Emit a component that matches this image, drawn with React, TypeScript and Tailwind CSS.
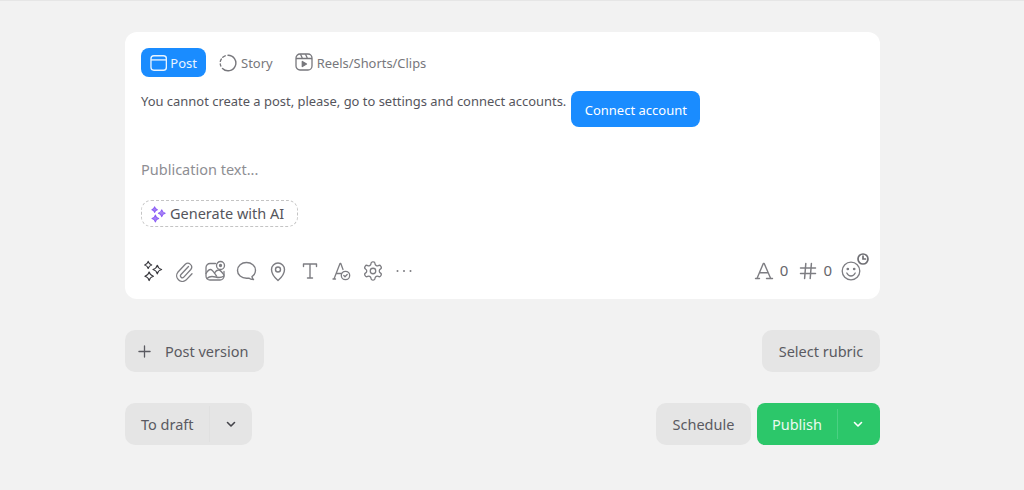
import React from "react";

const S = { fill: "none", stroke: "currentColor", strokeWidth: 1.5, strokeLinecap: "round" as const, strokeLinejoin: "round" as const };

function Sparkles({ className = "", w = 1.3, fill = "none" }: { className?: string; w?: number; fill?: string }) {
  return (
    <svg viewBox="0 0 24 24" className={className} {...S} strokeWidth={w} fill={fill}>
      <path d="M7.500 2.500c.6 2.300 1.400 3.100 3.700 3.700-2.300.6-3.100 1.400-3.700 3.700-.6-2.300-1.400-3.100-3.700-3.700 2.300-.6 3.100-1.400 3.700-3.700Z" />
      <path d="M17 6.500c.7 2.800 1.700 3.800 4.500 4.500-2.800.7-3.800 1.700-4.500 4.500-.7-2.800-1.700-3.800-4.500-4.500 2.800-.7 3.800-1.700 4.500-4.500Z" />
      <path d="M8.500 13.500c.7 2.900 1.600 3.800 4.500 4.500-2.900.7-3.800 1.600-4.500 4.500C7.800 19.600 6.900 18.700 4 18c2.900-.7 3.800-1.600 4.500-4.500Z" />
    </svg>
  );
}

function Chevron() {
  return (
    <svg viewBox="0 0 12 12" className="w-3 h-3" fill="none" stroke="currentColor" strokeWidth="1.6" strokeLinecap="round" strokeLinejoin="round">
      <path d="M2.500 4.500 6 8l3.500-3.500" />
    </svg>
  );
}

export default function App() {
  return (
    <div className="min-h-[490px] bg-[#f2f2f2] border-t border-[#e6e6e6] text-[#5a5a61] font-['Noto_Sans','Open_Sans',sans-serif]">
      <div className="w-[755px] ml-[125px] pt-[31px]">
        <div className="bg-white rounded-xl h-[267px] px-[16px] pt-[16px] flex flex-col">
          <div className="flex items-center h-[29px] text-[13px] text-[#77777c]">
            <div className="flex items-center gap-[3px] h-[29px] w-[65px] px-[9px] rounded-lg bg-[#1a8cff] text-[#e9f4ff]">
              <svg viewBox="0 0 18 18" className="w-[18px] h-[18px]" fill="none" stroke="currentColor" strokeWidth="1.4">
                <rect x="1" y="1.500" width="16" height="15" rx="3" />
                <path d="M1 5.800h16" />
              </svg>
              <span className="pt-[2px]">Post</span>
            </div>
            <div className="flex items-center gap-[4px] ml-[13px]">
              <svg viewBox="0 0 18 18" className="w-[18px] h-[18px]" fill="none" stroke="currentColor" strokeWidth="1.4" strokeLinecap="round">
                <path d="M9 1.200a7.800 7.800 0 1 1-5.500 13.300" />
                <path d="M1.800 12a7.800 7.800 0 0 1-.5-2" />
                <path d="M1.300 7.400a7.800 7.800 0 0 1 1-2.300" />
                <path d="M3.800 3.200a7.800 7.800 0 0 1 2.400-1.400" />
              </svg>
              <span className="pt-[2px]">Story</span>
            </div>
            <div className="flex items-center gap-[4px] ml-[22px]">
              <svg viewBox="0 0 18 18" className="w-[18px] h-[18px]" fill="none" stroke="currentColor" strokeWidth="1.300" strokeLinejoin="round">
                <rect x="1" y="1" width="16" height="16" rx="4" />
                <path d="M1 5.500h16M5.500 1.200 7.500 5.500M10.500 1.200l2 4.300" />
                <path d="M7.300 8.500v5l4.200-2.500Z" fill="currentColor" />
              </svg>
              <span className="pt-[2px] text-[12.900px]">Reels/Shorts/Clips</span>
            </div>
          </div>
          <div className="flex items-start mt-[14px] h-[36px]">
            <span className="text-[12.940px] leading-[21px] text-[#55555c] whitespace-nowrap">You cannot create a post, please, go to settings and connect accounts.</span>
            <button className="ml-[5px] h-[36px] w-[129px] pt-[3px] rounded-lg bg-[#1a8cff] text-white text-[13px] flex items-center justify-center">Connect account</button>
          </div>
          <div className="mt-[30px] text-[14.500px] leading-[24px] text-[#8e8e93]">Publication text...</div>
          <div className="mt-[19px] flex items-center gap-[3px] self-start h-[27px] w-[157px] pl-[7px] rounded-[10px] border border-dashed border-[#c4c4c4] text-[14.500px] text-[#55555c]">
            <Sparkles className="w-[18px] h-[18px] text-[#8b5cf6]" w={1.4} fill="#a583f3" />
            <span>Generate with AI</span>
          </div>
          <div className="flex items-center justify-between mt-[30px] h-[27px] text-[#7d7d82]">
            <div className="flex items-center gap-[9.500px]">
              <Sparkles className="w-[23px] h-[23px] -mx-[0.5px] text-[#3a3a3f]" w={1.2} />
              <svg viewBox="0 0 22 22" className="w-[22px] h-[22px]" {...S}>
                <path d="M15.500 6.500 8 14.500a1.900 1.900 0 0 0 2.800 2.600l7-7.600a3.800 3.800 0 0 0-5.500-5.200l-7.500 8a5.700 5.700 0 0 0 8.200 7.800l6-6.400" strokeWidth="1.300" />
              </svg>
              <svg viewBox="0 0 22 22" className="w-[22px] h-[22px]" {...S} strokeWidth={1.3}>
                <path d="M11.500 3.500H6A4 4 0 0 0 2 7.500V16a4 4 0 0 0 4 4h10a4 4 0 0 0 4-4v-4.500" />
                <path d="M2 13.500c1.800-3 3-4 4.500-4 2 0 3.500 3 6 6.500" />
                <path d="M10.500 13c1.200-2 2.500-3 4-3 1.800 0 3.500 2 5.500 5" />
                <path d="M3 18.500c1.500-1.500 3.500-2 5-2 2.500 0 4.500 1 7 1 2 0 3.500-.5 5-1.500" />
                <circle cx="16.500" cy="5.500" r="4" />
                <circle cx="16.500" cy="5.500" r="1" fill="currentColor" />
              </svg>
              <svg viewBox="0 0 22 22" className="w-[22px] h-[22px]" {...S} strokeWidth={1.4}>
                <path d="M10.500 2.500c5 0 9 3.300 9 7.800 0 3-1.500 5-3.500 6.300.2 1.300.7 2.300 1.500 3-2 0-3.800-.6-4.800-1.500-.7.100-1.400.200-2.200.200-5 0-9-3.300-9-7.800s4-8 9-8Z" />
              </svg>
              <svg viewBox="0 0 22 22" className="w-[22px] h-[22px]" {...S} strokeWidth={1.4}>
                <path d="M11 20.500s-6.500-5.500-6.500-11a6.500 6.500 0 0 1 13 0c0 5.500-6.500 11-6.500 11Z" />
                <circle cx="11" cy="9.500" r="2.500" />
              </svg>
              <svg viewBox="0 0 22 22" className="w-[22px] h-[22px]" {...S} strokeWidth={1.4}>
                <path d="M4.500 6.500V4h13v2.500M11 4v14M8.500 18h5" />
              </svg>
              <svg viewBox="0 0 22 22" className="w-[22px] h-[22px]" {...S} strokeWidth={1.3}>
                <path d="M3 19h2.500M4 19 10 3.500h.8L13 9.500M6.500 13.500h5" />
                <circle cx="15.500" cy="15.500" r="4.200" />
                <path d="m13.800 15.500 1.200 1.200 2.200-2.200" />
              </svg>
              <svg viewBox="0 0 24 24" className="w-[22px] h-[22px]" {...S} strokeWidth={1.4}>
                <path d="M12.220 2h-.44a2 2 0 0 0-2 2v.18a2 2 0 0 1-1 1.730l-.43.250a2 2 0 0 1-2 0l-.15-.08a2 2 0 0 0-2.730.730l-.22.380a2 2 0 0 0 .730 2.730l.15.100a2 2 0 0 1 1 1.720v.510a2 2 0 0 1-1 1.740l-.15.090a2 2 0 0 0-.730 2.730l.22.380a2 2 0 0 0 2.730.730l.15-.08a2 2 0 0 1 2 0l.43.250a2 2 0 0 1 1 1.730V20a2 2 0 0 0 2 2h.44a2 2 0 0 0 2-2v-.18a2 2 0 0 1 1-1.730l.43-.250a2 2 0 0 1 2 0l.15.080a2 2 0 0 0 2.730-.730l.22-.390a2 2 0 0 0-.730-2.730l-.15-.080a2 2 0 0 1-1-1.740v-.500a2 2 0 0 1 1-1.740l.15-.090a2 2 0 0 0 .730-2.730l-.22-.380a2 2 0 0 0-2.730-.730l-.15.080a2 2 0 0 1-2 0l-.43-.250a2 2 0 0 1-1-1.730V4a2 2 0 0 0-2-2Z" />
                <circle cx="12" cy="12" r="3" />
              </svg>
              <svg viewBox="0 0 22 22" className="w-[22px] h-[22px]" fill="currentColor">
                <circle cx="4.500" cy="11" r="1" />
                <circle cx="11" cy="11" r="1" />
                <circle cx="17.500" cy="11" r="1" />
              </svg>
            </div>
            <div className="flex items-center text-[15px] text-[#66666b] pr-[3px]">
              <svg viewBox="0 0 20 20" className="w-[20px] h-[20px] text-[#7d7d82]" {...S} strokeWidth={1.4}>
                <path d="M1.500 17.500h4M12.500 17.500h6M3 17.500 9.300 2.500h.9l6.500 15M5.500 11.800h8" />
              </svg>
              <span className="ml-[6px]">0</span>
              <svg viewBox="0 0 18 18" className="ml-[11px] w-[18px] h-[18px] text-[#7d7d82]" {...S} strokeWidth={1.5}>
                <path d="M1.500 6h15M1.500 11.500h15M6.800 1.500 5.600 16.500M12.400 1.500l-1.200 15" />
              </svg>
              <span className="ml-[6px]">0</span>
              <div className="relative ml-[9px] w-[20px] h-[20px]">
                <svg viewBox="0 0 20 20" className="w-[20px] h-[20px] text-[#7d7d82]" {...S} strokeWidth={1.3}>
                  <circle cx="10" cy="10" r="8.800" />
                  <circle cx="6.800" cy="8" r=".7" fill="currentColor" />
                  <circle cx="13.200" cy="8" r=".7" fill="currentColor" />
                  <path d="M5.800 12c1 2 2.500 3 4.200 3s3.200-1 4.200-3" />
                </svg>
                <svg viewBox="0 0 12 12" className="absolute -top-[8px] -right-[8px] w-[12px] h-[12px] text-[#6f6f74]" fill="#fff" stroke="currentColor" strokeWidth="1.700" strokeLinecap="round">
                  <circle cx="6" cy="6" r="5" />
                  <path d="M6 3.200V6h2.500" fill="none" />
                </svg>
              </div>
            </div>
          </div>
        </div>

        <div className="flex justify-between mt-[31px]">
          <button className="h-[42px] w-[139px] pl-[13px] rounded-[10px] bg-[#e5e5e5] flex items-center text-[14.500px]">
            <svg viewBox="0 0 14 14" className="w-[13px] h-[13px]" fill="none" stroke="currentColor" strokeWidth="1.400" strokeLinecap="round">
              <path d="M7 1v12M1 7h12" />
            </svg>
            <span className="ml-[14px] pt-px">Post version</span>
          </button>
          <button className="h-[42px] w-[118px] pt-px rounded-[10px] bg-[#e5e5e5] text-[14.500px]">Select rubric</button>
        </div>

        <div className="flex justify-between mt-[31px]">
          <div className="h-[42px] w-[127px] rounded-[10px] bg-[#e5e5e5] flex items-center text-[14.500px]">
            <span className="w-[85px] h-[36px] flex items-center pl-[16px] pt-px border-r border-[#e0e0e0]">To draft</span>
            <span className="flex-1 flex justify-center text-[#44444a]"><Chevron /></span>
          </div>
          <div className="flex gap-[6px] text-[14.500px]">
            <button className="h-[42px] w-[95px] pt-px rounded-[10px] bg-[#e5e5e5]">Schedule</button>
            <div className="h-[42px] w-[123px] rounded-lg bg-[#2cc76a] text-[#eafaf0] flex items-center">
              <span className="w-[81px] h-[30px] pt-px flex items-center justify-center border-r border-[#4bd083]">Publish</span>
              <span className="flex-1 flex justify-center pr-[3px] text-white"><Chevron /></span>
            </div>
          </div>
        </div>
      </div>
    </div>
  );
}
